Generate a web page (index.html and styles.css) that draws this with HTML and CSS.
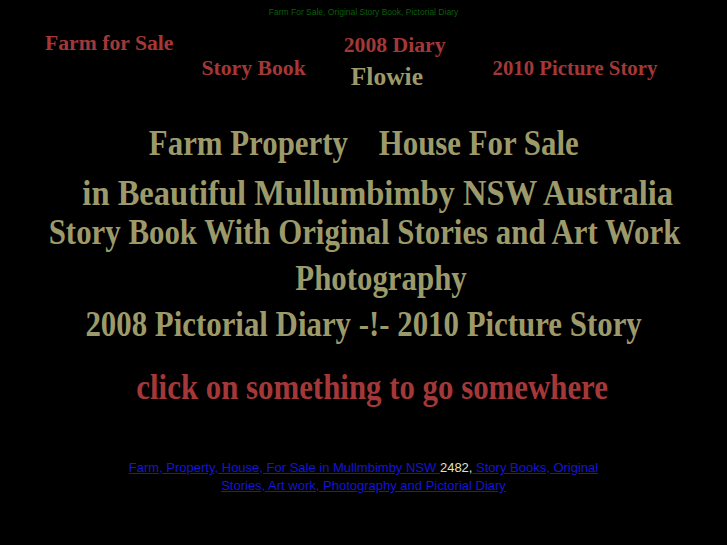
FILE: index.html
```html
<!DOCTYPE html>
<html>
<head>
<meta charset="utf-8">
<link rel="stylesheet" href="styles.css">
</head>
<body>
<div class="top">Farm For Sale, Original Story Book, Pictorial Diary</div>
<nav class="nav">
  <a class="nav-item red i1">Farm for Sale</a>
  <a class="nav-item red i2">Story Book</a>
  <div class="nav-col i3">
    <a class="nav-item red">2008 Diary</a>
    <a class="nav-item olive flowie">Flowie</a>
  </div>
  <a class="nav-item red i4">2010 Picture Story</a>
</nav>
<div class="headline">
  <div class="line l1"><span>Farm Property&nbsp;&nbsp;&nbsp;&nbsp;House For Sale</span></div>
  <div class="line l2"><span>in Beautiful Mullumbimby NSW Australia</span></div>
  <div class="line l3"><span>Story Book With Original Stories and Art Work</span></div>
  <div class="line l4"><span>Photography</span></div>
  <div class="line l5"><span>2008 Pictorial Diary -!- 2010 Picture Story</span></div>
  <div class="line click"><span>click on something to go somewhere</span></div>
</div>
<p class="foot"><a href="#">Farm, Property, House, For Sale in Mullmbimby NSW </a><span class="num">2482</span>,<a href="#"> Story Books, Original </a><br><a href="#">Stories, Art work, Photography and Pictorial Diary</a></p>
</body>
</html>
```
FILE: styles.css
```css
html, body { margin: 0; padding: 0; background: #000; }
body { width: 727px; height: 545px; overflow: hidden; font-family: "Liberation Serif", serif; }
.top { text-align: center; font-family: "Liberation Sans", sans-serif; font-size: 8.5px; color: #0b5f0b; padding-top: 8px; height: 14px; line-height: 9px; }
.nav { display: flex; height: 75px; padding-left: 45px; }
.nav-item { font-weight: bold; font-size: 21.7px; line-height: 22px; text-decoration: none; white-space: nowrap; display: block; }
.red { color: #a43838; }
.olive { color: #9c9a6a; }
.i1 { margin-top: 10px; }
.i2 { margin-top: 35px; margin-left: 28px; }
.nav-col { margin-left: 38px; margin-top: 12px; display: flex; flex-direction: column; }
.flowie { font-size: 25.5px; margin-top: 10px; margin-left: 7px; }
.i4 { margin-top: 35px; margin-left: 47px; font-size: 20.8px; }
.headline { text-align: center; color: #9c9a6a; font-weight: bold; margin-top: 26px; }
.line { font-size: 36px; line-height: 40px; white-space: nowrap; }
.line span { display: inline-block; transform: scaleX(0.857); }
.l1 { height: 50px; }
.l2 { height: 39px; padding-left: 28px; }
.l2 span { transform: scaleX(0.904); }
.l3 { height: 46px; }
.l3 span { margin-left: -4px; }
.l4 { height: 46px; padding-left: 35px; }
.l5 { height: 63px; }
.click { color: #a43838; height: 40px; padding-left: 18px; }
.foot { margin: 52px 0 0; text-align: center; font-family: "Liberation Sans", sans-serif; font-size: 13px; line-height: 18px; color: #e0e0c8; }
.foot a { color: #1515d5; }
```
